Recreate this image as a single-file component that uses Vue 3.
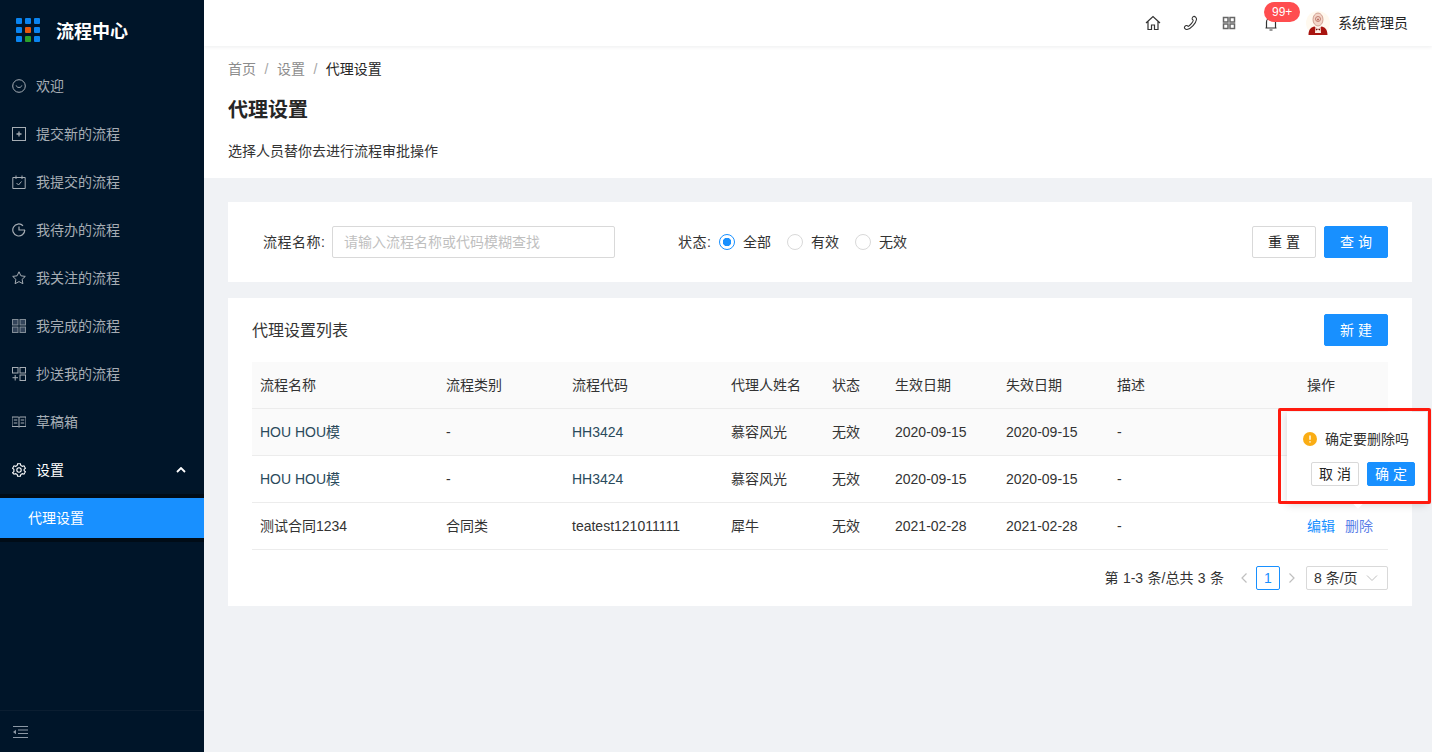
<script setup>
const menu = [
  { label: '欢迎', icon: 'smile' },
  { label: '提交新的流程', icon: 'plus' },
  { label: '我提交的流程', icon: 'cal' },
  { label: '我待办的流程', icon: 'clock' },
  { label: '我关注的流程', icon: 'star' },
  { label: '我完成的流程', icon: 'grid' },
  { label: '抄送我的流程', icon: 'gridplus' },
  { label: '草稿箱', icon: 'book' },
]
const columns = ['流程名称', '流程类别', '流程代码', '代理人姓名', '状态', '生效日期', '失效日期', '描述', '操作']
const widths = [186, 126, 159, 101, 63, 111, 111, 190, 89]
const rows = [
  { name: 'HOU HOU模', type: '-', code: 'HH3424', link: true, agent: '慕容风光', state: '无效', from: '2020-09-15', to: '2020-09-15', hover: true, ops: false },
  { name: 'HOU HOU模', type: '-', code: 'HH3424', link: true, agent: '慕容风光', state: '无效', from: '2020-09-15', to: '2020-09-15', ops: false },
  { name: '测试合同1234', type: '合同类', code: 'teatest121011111', link: false, agent: '犀牛', state: '无效', from: '2021-02-28', to: '2021-02-28', ops: true },
]
</script>

<template>
  <div class="app">
    <aside class="side">
      <div class="logo">
        <div class="dots">
          <i v-for="n in 9" :key="n" :class="{ orange: n === 5, green: n === 8 }"></i>
        </div>
        <span>流程中心</span>
      </div>
      <nav class="menu">
        <div v-for="m in menu" :key="m.label" class="item">
          <svg class="mi" viewBox="0 0 14 14" fill="none" stroke="currentColor" stroke-width="1">
            <template v-if="m.icon === 'smile'">
              <circle cx="7" cy="7" r="6.300" />
              <path d="M4.200 6.500c.5 2.600 5.100 2.600 5.600 0" />
            </template>
            <template v-else-if="m.icon === 'plus'">
              <rect x=".5" y=".5" width="13" height="13" />
              <path d="M4.500 7h5M7 4.500v5" stroke-width="1.300" />
            </template>
            <template v-else-if="m.icon === 'cal'">
              <path d="M.8 2.500h12.400v11H.8zM4 .5v3.500M10 .5v3.500M4.500 8l2 2 3-3.500" />
            </template>
            <template v-else-if="m.icon === 'clock'">
              <path d="M12.800 7a6 6 0 1 1-1.800-4.300M7 3.500V7h6" stroke-width="1.200" />
            </template>
            <template v-else-if="m.icon === 'star'">
              <path d="M7 .8l1.900 4 4.400.6-3.200 3 .8 4.300L7 10.600l-3.900 2.100.8-4.300-3.200-3 4.400-.6z" />
            </template>
            <template v-else-if="m.icon === 'grid'">
              <g fill="#33445a" stroke-opacity=".75">
                <rect x=".5" y=".5" width="5.500" height="5.500" /><rect x="8" y=".5" width="5.500" height="5.500" />
                <rect x=".5" y="8" width="5.500" height="5.500" /><rect x="8" y="8" width="5.500" height="5.500" />
              </g>
            </template>
            <template v-else-if="m.icon === 'gridplus'">
              <rect x=".5" y=".5" width="5.500" height="5.500" /><rect x="8" y=".5" width="5.500" height="5.500" />
              <rect x="8" y="8" width="5.500" height="5.500" />
              <path d="M.5 10.700h5.500M3.200 8v5.500" />
            </template>
            <template v-else>
              <path d="M0 2h6.200c.5 0 .8.300.8.800.1-.5.400-.8.900-.8H14v9.500H8c-.5 0-.9.300-1 .8-.1-.5-.5-.8-1-.8H0zM7 3v9M1.800 5h3.500M1.800 8h3.500M8.700 5h3.500M8.700 8h3.500" />
            </template>
          </svg>
          <span>{{ m.label }}</span>
        </div>
        <div class="item open">
          <svg class="mi" viewBox="0 0 14 14" fill="none" stroke="currentColor" stroke-width="1.100">
            <path d="M5.600 .8h2.800l.4 1.700 1.500.8 1.700-.5 1.400 2.400-1.300 1.200v1.200l1.300 1.200-1.400 2.400-1.700-.5-1.500.8-.4 1.700H5.600l-.4-1.700-1.500-.8-1.700.5L.6 9.800l1.300-1.200V6.400L.6 5.200 2 2.800l1.700.5 1.500-.8z" />
            <circle cx="7" cy="7" r="2.200" />
          </svg>
          <span>设置</span>
          <svg class="caret" viewBox="0 0 10 6" fill="none" stroke="currentColor" stroke-width="1.800">
            <path d="M1 5l4-4 4 4" />
          </svg>
        </div>
        <div class="sub"><div class="sub-item">代理设置</div></div>
      </nav>
      <div class="collapse">
        <svg viewBox="0 0 16 14" width="16" height="14" fill="none" stroke="#8c98a5" stroke-width="1.200">
          <path d="M1 1.500h15M6 5h10M6 8.500h10M1 12.500h15" />
          <path d="M4 4.800v4.400L1 7z" fill="#8c98a5" stroke="none" />
        </svg>
      </div>
    </aside>

    <div class="main">
      <header class="top">
        <svg class="ti" viewBox="0 0 16 16" fill="none" stroke="#333" stroke-width="1.200">
          <path d="M1 8l7-6.500L15 8M3 6.500V14.500h3.500V10h3v4.500H13V6.500" />
        </svg>
        <svg class="ti" viewBox="0 0 16 16" fill="none" stroke="#333" stroke-width="1.100">
          <path d="M10.500 1.500c1.200-.6 3.400 1.200 3 3-.5 3.500-5.500 9.500-9.500 10-1.700.2-3-1.500-2.500-2.500.3-.8 1.800-1.800 2.500-1.500.6.200.8 1.100 1.500.8 1.500-.7 4.500-4.300 4.700-5.800.1-.7-.8-.9-1-1.500-.2-.7.600-2.200 1.300-2.500z" />
        </svg>
        <svg class="ti grid" viewBox="0 0 16 16" fill="none" stroke="#666" stroke-width="1.500">
          <rect x="2.500" y="2.500" width="4.500" height="4.500" /><rect x="9" y="2.500" width="4.500" height="4.500" />
          <rect x="2.500" y="9" width="4.500" height="4.500" /><rect x="9" y="9" width="4.500" height="4.500" />
        </svg>
        <div class="bell">
          <svg class="ti" viewBox="0 0 16 16" fill="none" stroke="#333" stroke-width="1.200">
            <path d="M3.500 13V7a4.500 4.500 0 0 1 9 0v6M2.500 13h11M6.500 15h3" />
          </svg>
          <span class="badge">99+</span>
        </div>
        <div class="user">
          <svg class="avatar" viewBox="0 0 24 24">
            <circle cx="12" cy="12" r="12" fill="#fff9ef" />
            <path d="M2.500 24c0-6 3-8 6-8.500l3.500 2.500 3.500-2.500c3 .5 6 2.500 6 8.500z" fill="#a8140f" />
            <path d="M9.500 15.500l2.500 2.500 2.500-2.500.5 6.500H9z" fill="#fbeee6" />
            <path d="M10 17.500l2 1 2-1v2l-2-1-2 1z" fill="#6d0c08" />
            <ellipse cx="12" cy="8.500" rx="5" ry="6.500" fill="#f3d5c8" stroke="#c88f80" stroke-width=".8" />
            <circle cx="12" cy="8" r="2.500" fill="none" stroke="#b56a5c" stroke-width=".8" />
            <circle cx="12" cy="8.500" r="1" fill="#b56a5c" />
          </svg>
          <span>系统管理员</span>
        </div>
      </header>

      <section class="page-head">
        <div class="crumbs">
          <span>首页</span><em>/</em><span>设置</span><em>/</em><b>代理设置</b>
        </div>
        <h1>代理设置</h1>
        <p>选择人员替你去进行流程审批操作</p>
      </section>

      <div class="content">
        <section class="card filter">
          <label class="f-label">流程名称:</label>
          <div class="input">请输入流程名称或代码模糊查找</div>
          <label class="f-label state">状态:</label>
          <div class="radio on"><i></i><span>全部</span></div>
          <div class="radio"><i></i><span>有效</span></div>
          <div class="radio"><i></i><span>无效</span></div>
          <div class="f-actions">
            <button class="btn">重 置</button>
            <button class="btn primary">查 询</button>
          </div>
        </section>

        <section class="card list">
          <div class="list-head">
            <h2>代理设置列表</h2>
            <button class="btn primary">新 建</button>
          </div>
          <table>
            <colgroup><col v-for="(w, i) in widths" :key="i" :style="{ width: w + 'px' }" /></colgroup>
            <thead><tr><th v-for="c in columns" :key="c">{{ c }}</th></tr></thead>
            <tbody>
              <tr v-for="(r, i) in rows" :key="i" :class="{ hover: r.hover }">
                <td :class="{ code: r.link }">{{ r.name }}</td>
                <td>{{ r.type }}</td>
                <td :class="{ code: r.link }">{{ r.code }}</td>
                <td>{{ r.agent }}</td>
                <td>{{ r.state }}</td>
                <td>{{ r.from }}</td>
                <td>{{ r.to }}</td>
                <td>-</td>
                <td class="ops"><template v-if="r.ops"><a>编辑</a><a class="del">删除</a></template></td>
              </tr>
            </tbody>
          </table>
          <div class="pager">
            <span class="total">第 1-3 条/总共 3 条</span>
            <svg class="chev prev" viewBox="0 0 8 12" fill="none" stroke="#bfbfbf" stroke-width="1.200"><path d="M6.500 1.500L2 6l4.500 4.500" /></svg>
            <span class="page">1</span>
            <svg class="chev next" viewBox="0 0 8 12" fill="none" stroke="#bfbfbf" stroke-width="1.200"><path d="M1.500 1.500L6 6l-4.500 4.500" /></svg>
            <div class="size">
              <span>8 条/页</span>
              <svg viewBox="0 0 12 8" width="12" height="8" fill="none" stroke="#bfbfbf"><path d="M1 1.500l5 5 5-5" /></svg>
            </div>
          </div>
        </section>
      </div>
    </div>

    <div class="pop">
      <div class="pop-msg">
        <svg viewBox="0 0 14 14" width="14" height="14">
          <circle cx="7" cy="7" r="7" fill="#faad14" />
          <path d="M7 3.500v4.200M7 9.200v1.300" stroke="#fff" stroke-width="1.400" />
        </svg>
        <span>确定要删除吗</span>
      </div>
      <div class="pop-btns">
        <button class="mini">取 消</button>
        <button class="mini primary">确 定</button>
      </div>
      <i class="arrow"></i>
    </div>
    <div class="mark"></div>
  </div>
</template>

<style scoped>
.app {
  position: relative;
  display: flex;
  width: 1432px;
  height: 752px;
  overflow: hidden;
  background: #f0f2f5;
  color: #333;
  font: 14px/22px "Liberation Sans", "Noto Sans CJK SC", sans-serif;
}
.side {
  flex: none;
  display: flex;
  flex-direction: column;
  width: 204px;
  background: #001529;
  color: #a6adb4;
}
.logo {
  display: flex;
  align-items: center;
  gap: 16px;
  height: 62px;
  padding-left: 16px;
  color: #fff;
  font-size: 18px;
  font-weight: 700;
}
.logo span { margin-top: 1px; }
.dots {
  display: grid;
  grid-template-columns: repeat(3, 6px);
  gap: 3px;
  margin-top: -2px;
}
.dots i { height: 6px; border-radius: 1px; background: #0a84f0; }
.dots i.orange { background: #e8590c; }
.dots i.green { background: #2ba02b; }
.menu { flex: 1; padding-top: 4px; }
.item {
  display: flex;
  align-items: center;
  gap: 10px;
  height: 40px;
  margin-bottom: 8px;
  padding-left: 12px;
}
.mi { flex: none; width: 14px; height: 14px; }
.item.open { color: #fff; margin-bottom: 4px; }
.caret { width: 10px; height: 6px; margin-left: auto; margin-right: 18px; }
.sub { padding: 4px 0; background: #000c17; }
.sub-item {
  height: 40px;
  padding-left: 28px;
  line-height: 40px;
  background: #1890ff;
  color: #fff;
}
.collapse {
  display: flex;
  align-items: center;
  height: 41px;
  padding-left: 12px;
  border-top: 1px solid #0b1e31;
}
.main { flex: 1; min-width: 0; display: flex; flex-direction: column; }
.top {
  position: relative;
  display: flex;
  align-items: center;
  justify-content: flex-end;
  height: 46px;
  padding-right: 24px;
  background: #fff;
  box-shadow: 0 1px 4px rgba(0, 21, 41, .08);
}
.ti { display: block; width: 16px; height: 16px; }
.top > .ti { margin-right: 22px; margin-top: -1px; }
.top > .ti.grid { margin-right: 26px; }
.bell { position: relative; margin-right: 27px; margin-top: -1px; }
.badge {
  position: absolute;
  left: 1px;
  top: -13px;
  padding: 0 8px;
  height: 20px;
  border-radius: 10px;
  background: #ff4d4f;
  color: #fff;
  font-size: 12px;
  line-height: 20px;
}
.user { display: flex; align-items: center; gap: 8px; color: #262626; }
.avatar { width: 24px; height: 24px; }
.page-head {
  box-sizing: border-box;
  height: 132px;
  padding: 12px 24px 0;
  background: #fff;
}
.crumbs { display: flex; height: 22px; color: #8c8c8c; }
.crumbs em { margin: 0 8.500px; font-style: normal; color: #a6a6a6; }
.crumbs b { font-weight: 400; color: #262626; }
.page-head h1 { margin: 16px 0 0; font-size: 20px; font-weight: 600; line-height: 28px; color: #262626; }
.page-head p { margin: 16px 0 0; }
.content { flex: 1; padding: 24px 20px 0 24px; }
.card { background: #fff; }
.filter {
  display: flex;
  align-items: center;
  height: 80px;
  padding: 0 24px 0 35px;
  margin-bottom: 16px;
}
.f-label { letter-spacing: .5px; }
.input {
  width: 283px;
  height: 32px;
  margin-left: 6.600px;
  padding-left: 11px;
  border: 1px solid #d9d9d9;
  border-radius: 2px;
  box-sizing: border-box;
  color: #bfbfbf;
  line-height: 30px;
}
.state { margin: 0 7.600px 0 63px; }
.radio { display: flex; align-items: center; margin-right: 16px; }
.radio i {
  box-sizing: border-box;
  width: 16px;
  height: 16px;
  margin-right: 8px;
  border: 1px solid #d9d9d9;
  border-radius: 50%;
  background: #fff;
}
.radio.on i { border-color: #1890ff; background: radial-gradient(circle, #1890ff 4px, #fff 4.500px); }
.f-actions { display: flex; gap: 8px; margin-left: auto; }
.btn {
  width: 64px;
  height: 32px;
  padding: 0;
  border: 1px solid #d9d9d9;
  border-radius: 2px;
  background: #fff;
  color: #262626;
  font: inherit;
}
.btn.primary { border-color: #1890ff; background: #1890ff; color: #fff; }
.list { height: 308px; padding: 0 24px; }
.list-head {
  display: flex;
  align-items: center;
  justify-content: space-between;
  height: 64px;
}
.list-head h2 { margin: 2px 0 0; font-size: 16px; font-weight: 400; color: #333; }
table { width: 1136px; border-collapse: collapse; table-layout: fixed; }
th, td {
  height: 46px;
  padding: 0 8px;
  border-bottom: 1px solid #ececec;
  text-align: left;
  font-weight: 400;
  white-space: nowrap;
}
th { background: #fafafa; }
tr.hover td { background: #fafafa; }
.code { color: #2a4a5c; }
.ops a { color: #1890ff; }
.ops .del { margin-left: 10px; color: #5b7fe8; }
.pager {
  display: flex;
  align-items: center;
  justify-content: flex-end;
  height: 24px;
  margin-top: 16px;
}
.total { word-spacing: .5px; }
.chev { width: 8px; height: 12px; }
.chev.prev { margin: 0 8px 0 16px; }
.chev.next { margin: 0 10px 0 8px; }
.page {
  box-sizing: border-box;
  width: 24px;
  height: 24px;
  border: 1px solid #1890ff;
  border-radius: 2px;
  color: #1890ff;
  text-align: center;
}
.size {
  box-sizing: border-box;
  display: flex;
  align-items: center;
  justify-content: space-between;
  width: 82px;
  height: 24px;
  padding: 0 9px 0 7px;
  border: 1px solid #d9d9d9;
  border-radius: 2px;
}
.pop {
  position: absolute;
  left: 1287px;
  top: 412px;
  width: 140px;
  height: 91px;
  box-sizing: border-box;
  padding: 16px 12px 0 16px;
  background: #fff;
  box-shadow: 0 2px 8px rgba(0, 0, 0, .15);
}
.pop-msg { display: flex; align-items: center; gap: 8px; }
.pop-btns { display: flex; justify-content: flex-end; gap: 8px; margin-top: 12px; }
.mini {
  width: 48px;
  height: 24px;
  padding: 0;
  border: 1px solid #d9d9d9;
  border-radius: 2px;
  background: #fff;
  color: #262626;
  font: inherit;
}
.mini.primary { border-color: #1890ff; background: #1890ff; color: #fff; }
.arrow {
  position: absolute;
  left: 67px;
  bottom: -4px;
  width: 8px;
  height: 8px;
  background: #fff;
  transform: rotate(45deg);
}
.mark {
  position: absolute;
  left: 1278px;
  top: 408px;
  width: 153px;
  height: 96px;
  box-sizing: border-box;
  border: 3px solid #ff1a0e;
  border-radius: 2px;
}
</style>
